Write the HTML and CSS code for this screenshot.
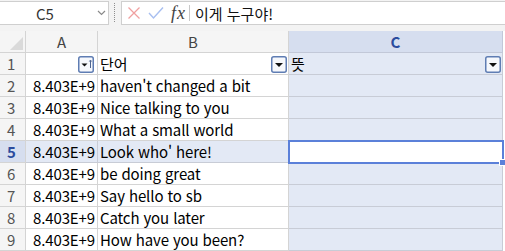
FILE: index.html
```html
<!DOCTYPE html>
<html lang="ko">
<head>
<meta charset="utf-8">
<link rel="stylesheet" href="styles.css">
</head>
<body>
<div class="toolbar">
  <div class="namebox">
    <span class="name">C5</span>
    <svg class="chev" width="9" height="6" viewBox="0 0 9 6"><path d="M1 1 L4.5 4.5 L8 1" fill="none" stroke="#8a8a8a" stroke-width="1.2"/></svg>
  </div>
  <div class="grip"></div>
  <div class="formula">
    <svg class="ico" width="14" height="14" viewBox="0 0 14 14"><path d="M1.5 1.5 L12.5 12.5 M12.5 1.5 L1.5 12.5" stroke="#f0a0a0" stroke-width="1.3" fill="none"/></svg>
    <svg class="ico" width="16" height="14" viewBox="0 0 16 14"><path d="M1 7 L5.5 12 L15 1.5" stroke="#a8bff0" stroke-width="1.4" fill="none"/></svg>
    <span class="fx"><i>f</i><i>x</i></span>
    <span class="fsep"></span>
    <span class="ftext">이게 누구야!</span>
  </div>
</div>
<div class="sheet">
  <div class="corner"><span class="tri"></span></div>
  <div class="colh">A</div>
  <div class="colh">B</div>
  <div class="colh sel">C</div>

  <div class="rowh">1</div>
  <div class="cell num">
    <svg class="fbtn" width="16" height="17" viewBox="0 0 16 17"><rect x="0.75" y="0.75" width="14.5" height="15.5" rx="2" fill="#f6f8fc" stroke="#5f7db3" stroke-width="1.5"/><path d="M3.5 7.5 H9.5 L6.5 10.5 Z" fill="#111"/><path d="M12.5 4.5 V12" stroke="#4d6490" stroke-width="1"/><path d="M11.3 5.6 L12.5 4 L13.7 5.6" fill="none" stroke="#4d6490" stroke-width="0.9"/></svg>
  </div>
  <div class="cell txt">단어
    <svg class="fbtn" width="16" height="17" viewBox="0 0 16 17"><rect x="0.75" y="0.75" width="14.5" height="15.5" rx="2" fill="#f6f8fc" stroke="#5f7db3" stroke-width="1.5"/><path d="M4 7 H12 L8 11 Z" fill="#111"/></svg>
  </div>
  <div class="cell txt focus">뜻
    <svg class="fbtn" width="16" height="17" viewBox="0 0 16 17"><rect x="0.75" y="0.75" width="14.5" height="15.5" rx="2" fill="#f6f8fc" stroke="#5f7db3" stroke-width="1.5"/><path d="M4 7 H12 L8 11 Z" fill="#111"/></svg>
  </div>

  <div class="rowh">2</div>
  <div class="cell num">8.403E+9</div>
  <div class="cell txt">haven't changed a bit</div>
  <div class="cell focus"></div>

  <div class="rowh">3</div>
  <div class="cell num">8.403E+9</div>
  <div class="cell txt">Nice talking to you</div>
  <div class="cell focus"></div>

  <div class="rowh">4</div>
  <div class="cell num">8.403E+9</div>
  <div class="cell txt">What a small world</div>
  <div class="cell focus"></div>

  <div class="rowh sel">5</div>
  <div class="cell num focus">8.403E+9</div>
  <div class="cell txt focus">Look who' here!</div>
  <div class="cell active"><span class="handle"></span></div>

  <div class="rowh">6</div>
  <div class="cell num">8.403E+9</div>
  <div class="cell txt">be doing great</div>
  <div class="cell focus"></div>

  <div class="rowh">7</div>
  <div class="cell num">8.403E+9</div>
  <div class="cell txt">Say hello to sb</div>
  <div class="cell focus"></div>

  <div class="rowh">8</div>
  <div class="cell num">8.403E+9</div>
  <div class="cell txt">Catch you later</div>
  <div class="cell focus"></div>

  <div class="rowh">9</div>
  <div class="cell num">8.403E+9</div>
  <div class="cell txt">How have you been?</div>
  <div class="cell focus"></div>
</div>
</body>
</html>
```

FILE: styles.css
```css
html, body {
  margin: 0;
  padding: 0;
  background: #f3f3f3;
  overflow: hidden;
}
body {
  width: 505px;
  height: 251px;
  font-family: "Noto Sans CJK KR", "Noto Sans", sans-serif;
  font-size: 15px;
  color: #000;
}
.toolbar {
  height: 31px;
  display: flex;
  align-items: flex-start;
  padding-top: 1px;
  box-sizing: border-box;
  background: #f3f3f3;
}
.namebox {
  width: 109px;
  height: 24px;
  box-sizing: border-box;
  background: #fff;
  border: 1px solid #cfcfcf;
  border-left: none;
  display: flex;
  align-items: center;
}
.name {
  width: 90px;
  text-align: center;
  color: #333;
  font-size: 15px;
}
.chev {
  margin-left: 7px;
}
.grip {
  width: 1px;
  height: 20px;
  margin: 2px 6px 0 5px;
  background: repeating-linear-gradient(to bottom, #8e8e8e 0 1px, transparent 1px 2px);
}
.formula {
  flex: 1;
  height: 24px;
  box-sizing: border-box;
  background: #fff;
  border: 1px solid #cfcfcf;
  border-right: none;
  display: flex;
  align-items: center;
  padding-left: 5px;
}
.ico {
  margin-right: 7px;
}
.fx {
  font-family: "Liberation Serif", "DejaVu Serif", serif;
  font-size: 18px;
  color: #444;
  margin-left: 0;
}
.fx i:first-child { margin-right: 1px; }
.fsep {
  width: 1px;
  height: 16px;
  background: #c8c8c8;
  margin: 0 5px 0 4px;
}
.ftext {
  color: #111;
  font-size: 15px;
}
.sheet {
  display: grid;
  grid-template-columns: 26px 72px 191px 214px;
  grid-template-rows: 22px repeat(9, 22px);
  background: #fff;
  width: 505px;
}
.corner, .colh, .rowh {
  background: #f5f5f5;
  box-sizing: border-box;
  color: #444;
}
.corner {
  border-right: 1px solid #d4d4d4;
  border-bottom: 1px solid #d4d4d4;
  position: relative;
}
.tri {
  position: absolute;
  right: 2px;
  bottom: 2px;
  width: 0;
  height: 0;
  border-left: 13px solid transparent;
  border-bottom: 13px solid #dadada;
}
.colh {
  border-right: 1px solid #d4d4d4;
  border-bottom: 1px solid #d4d4d4;
  text-align: center;
  line-height: 21px;
  font-size: 15px;
}
.colh.sel {
  background: #d6deef;
  color: #2b4c9e;
  font-weight: bold;
  border-bottom: 1px solid #c2c8d8;
  border-right: 1px solid #c2c8d8;
}
.rowh {
  border-right: 1px solid #d4d4d4;
  border-bottom: 1px solid #d4d4d4;
  padding-left: 7px;
  line-height: 21px;
  font-size: 15px;
  color: #555;
}
.rowh.sel {
  background: #d6deef;
  color: #2b4c9e;
  font-weight: bold;
}
.cell {
  box-sizing: border-box;
  border-right: 1px solid #d4d4d4;
  border-bottom: 1px solid #d4d4d4;
  line-height: 21px;
  white-space: nowrap;
  letter-spacing: -0.12px;
  display: flex;
  align-items: center;
  position: relative;
}
.num {
  justify-content: flex-end;
  padding-right: 2px;
}
.txt {
  padding-left: 2px;
  justify-content: space-between;
}
.focus {
  background: #e3e9f5;
  border-color: #c8ccd6;
}
.fbtn {
  margin-right: 1px;
  margin-top: 1px;
}
.active {
  background: #fff;
  border: 2px solid #5b80d9;
  margin: -1px -1px -1px -1px;
  z-index: 2;
}
.handle {
  position: absolute;
  right: -4px;
  bottom: -4px;
  width: 5px;
  height: 5px;
  background: #5b80d9;
  border: 1px solid #fff;
}
```
